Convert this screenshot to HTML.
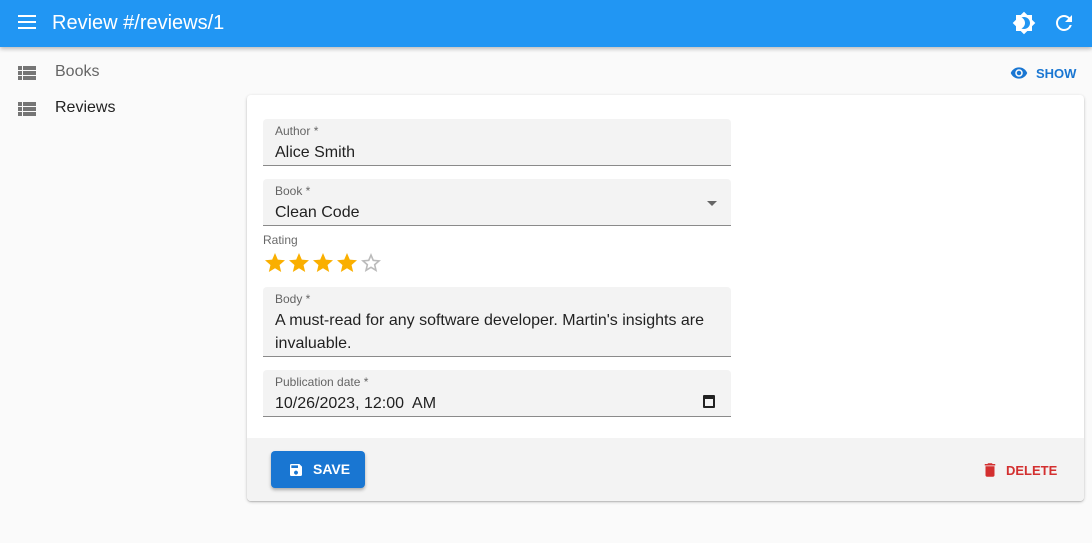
<!DOCTYPE html>
<html><head><style>
*{box-sizing:border-box;margin:0;padding:0}
body{width:1092px;height:543px;background:#fafafa;font-family:"Liberation Sans",Roboto,sans-serif;position:relative;overflow:hidden;color:rgba(0,0,0,.87)}
.bar{position:absolute;left:0;top:0;width:1092px;height:47px;background:#2196f3;box-shadow:0 2px 4px rgba(0,0,0,.25);color:#fff}
.abs{position:absolute}
.menu{left:18px;top:15px;width:18px;height:2px;background:#fff;box-shadow:0 6px 0 #fff,0 12px 0 #fff}
.title{left:52px;top:12px;font-size:20px}
.nav{font-size:16px}
.card{left:247px;top:95px;width:837px;height:406px;background:#fff;border-radius:4px;box-shadow:0 1px 3px rgba(0,0,0,.2),0 1px 1px rgba(0,0,0,.14)}
.f{position:absolute;left:16px;width:468px;background:#f3f3f3;border-radius:4px 4px 0 0;border-bottom:1px solid #8a8a8a}
.f .l{position:absolute;left:12px;top:5px;font-size:12px;color:rgba(0,0,0,.6)}
.f .v{position:absolute;left:12px;top:22px;font-size:16px;line-height:23px;color:rgba(0,0,0,.87)}
.tb{position:absolute;left:0;top:343px;width:837px;height:63px;background:#f3f3f3;border-radius:0 0 4px 4px}
.save{position:absolute;left:24px;top:13px;width:94px;height:37px;background:#1976d2;border-radius:4px;color:#fff;font-size:14px;font-weight:bold;box-shadow:0 2px 3px rgba(0,0,0,.3)}
.st{position:absolute;top:0;width:24px;height:24px}
</style></head><body>
<div class="bar">
<div class="abs menu"></div>
<div class="abs title">Review #/reviews/1</div>
<svg class="abs" style="left:1012px;top:11px" width="24" height="24" viewBox="0 0 24 24"><path fill="#fff" d="M20 8.69V4h-4.69L12 .69 8.69 4H4v4.69L.69 12 4 15.31V20h4.69L12 23.31 15.31 20H20v-4.69L23.31 12 20 8.69zM12 18c-.89 0-1.74-.2-2.5-.55C11.560 16.5 13 14.42 13 12s-1.44-4.5-3.5-5.45C10.26 6.2 11.11 6 12 6c3.31 0 6 2.69 6 6s-2.69 6-6 6z"/></svg>
<svg class="abs" style="left:1052px;top:11px" width="24" height="24" viewBox="0 0 24 24"><path fill="#fff" d="M17.65 6.35A7.958 7.958 0 0012 4c-4.42 0-7.99 3.58-7.99 8s3.57 8 7.99 8c3.73 0 6.84-2.55 7.730-6h-2.08A5.99 5.99 0 0112 18c-3.31 0-6-2.69-6-6s2.69-6 6-6c1.66 0 3.14.69 4.22 1.78L13 11h7V4l-2.35 2.35z"/></svg>
</div>
<svg class="abs" style="left:15px;top:61px" width="24" height="24" viewBox="0 0 24 24"><path fill="#757575" d="M3 14h4v-4H3v4zm0 5h4v-4H3v4zM3 9h4V5H3v4zm5 5h13v-4H8v4zm0 5h13v-4H8v4zM8 5v4h13V5H8z"/></svg>
<div class="abs nav" style="left:55px;top:63px;color:rgba(0,0,0,.6)">Books</div>
<svg class="abs" style="left:15px;top:97px" width="24" height="24" viewBox="0 0 24 24"><path fill="#757575" d="M3 14h4v-4H3v4zm0 5h4v-4H3v4zM3 9h4V5H3v4zm5 5h13v-4H8v4zm0 5h13v-4H8v4zM8 5v4h13V5H8z"/></svg>
<div class="abs nav" style="left:55px;top:99px">Reviews</div>
<svg class="abs" style="left:1010px;top:64px" width="18" height="18" viewBox="0 0 24 24"><path fill="#1976d2" d="M12 4.5C7 4.5 2.73 7.61 1 12c1.73 4.39 6 7.5 11 7.5s9.27-3.11 11-7.5c-1.73-4.39-6-7.5-11-7.5zM12 17c-2.76 0-5-2.240-5-5s2.24-5 5-5 5 2.24 5 5-2.24 5-5 5zm0-8c-1.66 0-3 1.34-3 3s1.34 3 3 3 3-1.34 3-3-1.34-3-3-3z"/></svg>
<div class="abs" style="left:1036px;top:66px;font-size:13px;font-weight:bold;color:#1976d2">SHOW</div>
<div class="abs card">
<div class="f" style="top:24px;height:47px"><div class="l">Author *</div><div class="v">Alice Smith</div></div>
<div class="f" style="top:84px;height:47px"><div class="l">Book *</div><div class="v">Clean Code</div>
<div class="abs" style="right:14px;top:22px;width:0;height:0;border-left:5px solid transparent;border-right:5px solid transparent;border-top:5px solid #666"></div></div>
<div class="abs" style="left:16px;top:138px;font-size:12px;color:rgba(0,0,0,.6)">Rating</div>
<div class="abs" style="left:16px;top:156px;width:130px;height:24px">
<svg class="st" style="left:0" viewBox="0 0 24 24"><path fill="#faaf00" d="M12 17.27L18.18 21l-1.64-7.03L22 9.24l-7.19-.61L12 2 9.19 8.63 2 9.24l5.46 4.73L5.82 21z"/></svg>
<svg class="st" style="left:24px" viewBox="0 0 24 24"><path fill="#faaf00" d="M12 17.27L18.18 21l-1.64-7.03L22 9.24l-7.19-.61L12 2 9.19 8.63 2 9.24l5.46 4.73L5.82 21z"/></svg>
<svg class="st" style="left:48px" viewBox="0 0 24 24"><path fill="#faaf00" d="M12 17.27L18.18 21l-1.64-7.03L22 9.24l-7.19-.61L12 2 9.19 8.63 2 9.24l5.46 4.73L5.82 21z"/></svg>
<svg class="st" style="left:72px" viewBox="0 0 24 24"><path fill="#faaf00" d="M12 17.27L18.18 21l-1.64-7.03L22 9.24l-7.19-.61L12 2 9.19 8.63 2 9.24l5.46 4.73L5.82 21z"/></svg>
<svg class="st" style="left:96px" viewBox="0 0 24 24"><path fill="#bbb" d="M22 9.24l-7.19-.62L12 2 9.19 8.63 2 9.24l5.46 4.73L5.82 21 12 17.27 18.18 21l-1.63-7.03L22 9.24zM12 15.4l-3.76 2.27 1-4.28-3.32-2.88 4.38-.38L12 6.1l1.71 4.04 4.38.38-3.32 2.88 1 4.28L12 15.4z"/></svg>
</div>
<div class="f" style="top:192px;height:70px"><div class="l">Body *</div><div class="v" style="width:450px">A must-read for any software developer. Martin's insights are invaluable.</div></div>
<div class="f" style="top:275px;height:47px"><div class="l">Publication date *</div><div class="v">10/26/2023, 12:00&nbsp; AM</div>
<div class="abs" style="right:16px;top:25px;width:12px;height:13px;border:2px solid #222;border-top-width:4px;border-radius:1px"></div></div>
<div class="tb">
<div class="save"><svg class="abs" style="left:17px;top:11px" width="16" height="16" viewBox="0 0 24 24"><path fill="#fff" d="M17 3H5a2 2 0 00-2 2v14a2 2 0 002 2h14c1.1 0 2-.9 2-2V7l-4-4zm-5 16c-1.66 0-3-1.34-3-3s1.34-3 3-3 3 1.34 3 3-1.34 3-3 3zm3-10H5V5h10v4z"/></svg><span class="abs" style="left:42px;top:10px">SAVE</span></div>
<svg class="abs" style="left:734px;top:23px" width="18" height="18" viewBox="0 0 24 24"><path fill="#d32f2f" d="M6 19c0 1.1.9 2 2 2h8c1.1 0 2-.9 2-2V7H6v12zM19 4h-3.5l-1-1h-5l-1 1H5v2h14V4z"/></svg>
<div class="abs" style="left:759px;top:25px;font-size:13px;font-weight:bold;color:#d32f2f">DELETE</div>
</div>
</div>
</body></html>
